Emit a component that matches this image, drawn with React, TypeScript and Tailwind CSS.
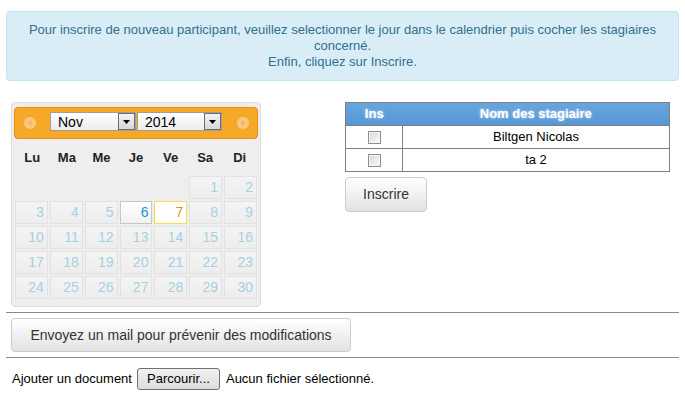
import React from 'react';

const weeks: (number | null)[][] = [
  [null, null, null, null, null, 1, 2],
  [3, 4, 5, 6, 7, 8, 9],
  [10, 11, 12, 13, 14, 15, 16],
  [17, 18, 19, 20, 21, 22, 23],
  [24, 25, 26, 27, 28, 29, 30],
];

const dayNames = ['Lu', 'Ma', 'Me', 'Je', 'Ve', 'Sa', 'Di'];

const stagiaires = ['Biltgen Nicolas', 'ta 2'];

function NavCircle({ dir }: { dir: 'prev' | 'next' }) {
  return (
    <svg width="12" height="12" viewBox="0 0 12 12" className="shrink-0">
      <circle cx="6" cy="6" r="6" fill="#fac980" />
      {dir === 'prev' ? (
        <path d="M7.5 3 L4 6 L7.5 9 Z" fill="#f6b14c" />
      ) : (
        <path d="M4.5 3 L8 6 L4.5 9 Z" fill="#f6b14c" />
      )}
    </svg>
  );
}

function Select({ value, width }: { value: string; width: string }) {
  return (
    <div
      className={`${width} h-[19px] flex items-center border border-[#9d9d9d] bg-[linear-gradient(to_bottom,#ffffff,#ececec)]`}
    >
      <span className="flex-1 pl-[7px] text-[14px] leading-none text-black">{value}</span>
      <div className="w-[17px] h-[17px] border border-[#6e6e6e] bg-[linear-gradient(to_bottom,#f4f4f4,#d6d6d6)] flex items-center justify-center">
        <svg width="7" height="4" viewBox="0 0 7 4">
          <path d="M0 0 H7 L3.5 4 Z" fill="#000" />
        </svg>
      </div>
    </div>
  );
}

function DayCell({ day }: { day: number | null }) {
  if (day === null) return <div className="h-[23px]" />;
  if (day === 6) {
    return (
      <div className="h-[23px] border border-[#c6c6c6] bg-[linear-gradient(to_bottom,#ffffff,#f1f1f1)] text-right pr-[3px] text-[14px] leading-[21px] text-[#1c94c4]">
        {day}
      </div>
    );
  }
  if (day === 7) {
    return (
      <div className="h-[23px] border border-[#fbd850] bg-white text-right pr-[3px] text-[14px] leading-[21px] text-[#eb8f00]">
        {day}
      </div>
    );
  }
  return (
    <div className="h-[23px] border border-[#e2e2e2] bg-[linear-gradient(to_bottom,#f4f4f4,#ededed)] text-right pr-[3px] text-[14px] leading-[21px] text-[#a7d0e2]">
      {day}
    </div>
  );
}

function Checkbox() {
  return (
    <div className="w-[13px] h-[13px] border border-[#8e8f8f] bg-[#f4f4f4] p-[1px] mx-auto">
      <div className="w-full h-full bg-[linear-gradient(135deg,#d8d8d8,#fafafa)]" />
    </div>
  );
}

export default function App() {
  return (
    <div className="w-[685px] h-[400px] bg-white px-[6px] pt-[11px] font-['Liberation_Sans',Arial,sans-serif] text-[13px] text-black">
      {/* Info */}
      <div className="h-[70px] rounded-[4px] border border-[#bce8f1] bg-[#d9edf7] text-[#31708f] text-center leading-[16px] pt-[10px]">
        Pour inscrire de nouveau participant, veuillez selectionner le jour dans le calendrier puis cocher les stagiaires
        <br />
        concerné.
        <br />
        Enfin, cliquez sur Inscrire.
      </div>

      <div className="flex mt-[21px] pl-[5px]">
        {/* Calendar */}
        <div className="w-[250px] h-[205px] rounded-[4px] border border-[#dddddd] bg-[#eeeeee] px-[2px] pt-[4px]">
          <div className="h-[32px] rounded-[4px] border border-[#e78f08] bg-[#f6a828] flex items-center pl-[9px] pr-[8px]">
            <NavCircle dir="prev" />
            <div className="flex ml-[14px] gap-[1px] -mt-[3px]">
              <Select value="Nov" width="w-[86px]" />
              <Select value="2014" width="w-[85px]" />
            </div>
            <div className="flex-1" />
            <NavCircle dir="next" />
          </div>
          <div className="h-[37px] grid grid-cols-7 items-center px-[1px]">
            {dayNames.map(d => (
              <div key={d} className="text-center font-bold text-[13px] text-[#222]">
                {d}
              </div>
            ))}
          </div>
          <div className="grid grid-cols-7 gap-x-[2px] gap-y-[2px] px-[1px]">
            {weeks.flat().map((d, i) => (
              <DayCell key={i} day={d} />
            ))}
          </div>
        </div>

        {/* Stagiaires */}
        <div className="ml-[84px]">
          <table className="w-[325px] border-collapse border border-[#808080]">
            <thead>
              <tr className="h-[23px] bg-[linear-gradient(to_bottom,#67a6df,#5596d5)] text-white font-bold text-[13px] [text-shadow:0_0_3px_rgba(255,255,255,0.7)]">
                <th className="w-[57px] p-0">Ins</th>
                <th className="p-0">Nom des stagiaire</th>
              </tr>
            </thead>
            <tbody>
              {stagiaires.map(s => (
                <tr key={s} className="h-[23px] border-t border-[#808080]">
                  <td className="p-0 border-r border-[#808080]">
                    <Checkbox />
                  </td>
                  <td className="p-0 text-center">{s}</td>
                </tr>
              ))}
            </tbody>
          </table>
          <button className="mt-[5px] w-[82px] h-[35px] rounded-[4px] border border-[#cccccc] bg-[linear-gradient(to_bottom,#ffffff,#e2e2e2)] text-[14px] text-[#333]">
            Inscrire
          </button>
        </div>
      </div>

      <hr className="mt-[5px] border-t border-[#8a8a8a]" />

      <button className="ml-[5px] mt-[5px] w-[340px] h-[34px] rounded-[4px] border border-[#cccccc] bg-[linear-gradient(to_bottom,#ffffff,#e2e2e2)] text-[14px] text-[#333]">
        Envoyez un mail pour prévenir des modifications
      </button>

      <hr className="mt-[5px] border-t border-[#8a8a8a]" />

      <div className="flex items-center mt-[10px] h-[22px] pl-[6px]">
        <span>Ajouter un document</span>
        <button className="ml-[5px] w-[83px] h-[22px] rounded-[3px] border border-[#707070] bg-[linear-gradient(to_bottom,#f2f2f2,#dcdcdc)] text-[13px] text-black">
          Parcourir...
        </button>
        <span className="ml-[6px]">Aucun fichier sélectionné.</span>
      </div>
    </div>
  );
}
